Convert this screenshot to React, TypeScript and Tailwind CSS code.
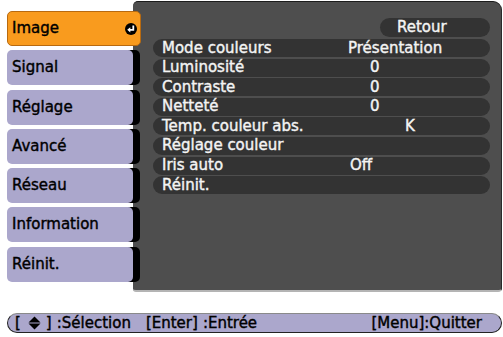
import React from 'react';

const tabs = ['Image', 'Signal', 'Réglage', 'Avancé', 'Réseau', 'Information', 'Réinit.'];

const rows = [
  { label: 'Mode couleurs', value: 'Présentation', valueClass: 'ml-0' },
  { label: 'Luminosité', value: '0', valueClass: 'ml-[22px]' },
  { label: 'Contraste', value: '0', valueClass: 'ml-[22px]' },
  { label: 'Netteté', value: '0', valueClass: 'ml-[22px]' },
  { label: 'Temp. couleur abs.', value: 'K', valueClass: 'ml-[57px]' },
  { label: 'Réglage couleur', value: '', valueClass: 'ml-0' },
  { label: 'Iris auto', value: 'Off', valueClass: 'ml-[2px]' },
  { label: 'Réinit.', value: '', valueClass: 'ml-0' },
];

const EnterIcon = () => (
  <svg width="12" height="12" viewBox="0 0 12 12" className="ml-auto mr-[3px]">
    <circle cx="6" cy="6" r="6" fill="#000" />
    <path d="M8.3 2.6 V6.8 H4.6" stroke="#fff" strokeWidth="1.8" fill="none" />
    <path d="M2.2 6.8 L5.3 4.2 L5.3 9.4 Z" fill="#fff" />
  </svg>
);

const UpDownIcon = () => (
  <svg width="13" height="14" viewBox="0 0 13 14">
    <path d="M6.5 0.5 L12.5 6.4 H0.5 Z" fill="#000" />
    <path d="M0.5 7.6 H12.5 L6.5 13.5 Z" fill="#000" />
  </svg>
);

export default function App() {
  return (
    <div className="w-[503px] h-[337px] bg-white overflow-hidden pt-[1px] text-[15px] leading-none [font-family:'DejaVu_Sans',sans-serif] [-webkit-text-stroke:0.4px_currentColor]">
      <div className="flex h-[291px]">
        <div className="relative z-10 w-[133px] shrink-0 pt-[10px] flex flex-col gap-[4.3px]">
          {tabs.map((t, i) =>
            i === 0 ? (
              <div
                key={t}
                className="ml-[7px] w-[134px] h-[35px] rounded-[5px] bg-[#f99b1e] border border-[#b86a10] flex items-center pl-[4px] text-black"
              >
                <span>{t}</span>
                <EnterIcon />
              </div>
            ) : (
              <div
                key={t}
                className="ml-[7px] w-[126px] h-[35px] rounded-[5px] bg-[#aba7cc] shadow-[7px_0_0_#000] flex items-center pl-[5px] text-black"
              >
                {t}
              </div>
            )
          )}
        </div>
        <div className="flex-1 mr-[1px] bg-[#4e4e4e] rounded-tl-[5px] rounded-tr-[9px] rounded-bl-[3px] rounded-br-[4px] border-t border-t-[#1c1c1c] border-r border-r-[#2a2a2a] border-b-2 border-b-[#b4b4b4] pt-[16px] pl-[20px] pr-[11px] text-[#f4f4f4]">
          <div className="flex justify-end">
            <div className="w-[110px] h-[19px] rounded-full bg-[#333333] flex items-center pl-[17px]">Retour</div>
          </div>
          <div className="mt-[2px] flex flex-col gap-[1.6px]">
            {rows.map((r) => (
              <div key={r.label} className="h-[18px] rounded-full bg-[#333333] flex items-center pl-[9px]">
                <span className="w-[186px] shrink-0">{r.label}</span>
                <span className={r.valueClass}>{r.value}</span>
              </div>
            ))}
          </div>
        </div>
      </div>
      <div className="mt-[21px] ml-[7px] mr-[1px] h-[20px] rounded-full bg-[#aba7cc] border border-[#222] border-t-[#8a8a8a] flex items-center text-black">
        <span className="ml-[7px]">[</span>
        <span className="ml-[7px] flex items-center">
          <UpDownIcon />
        </span>
        <span className="ml-[5px]">]</span>
        <span className="ml-[5px]">:Sélection</span>
        <span className="ml-[15px]">[Enter]</span>
        <span className="ml-[5px]">:Entrée</span>
        <span className="ml-auto mr-[19px]">[Menu]:Quitter</span>
      </div>
    </div>
  );
}
